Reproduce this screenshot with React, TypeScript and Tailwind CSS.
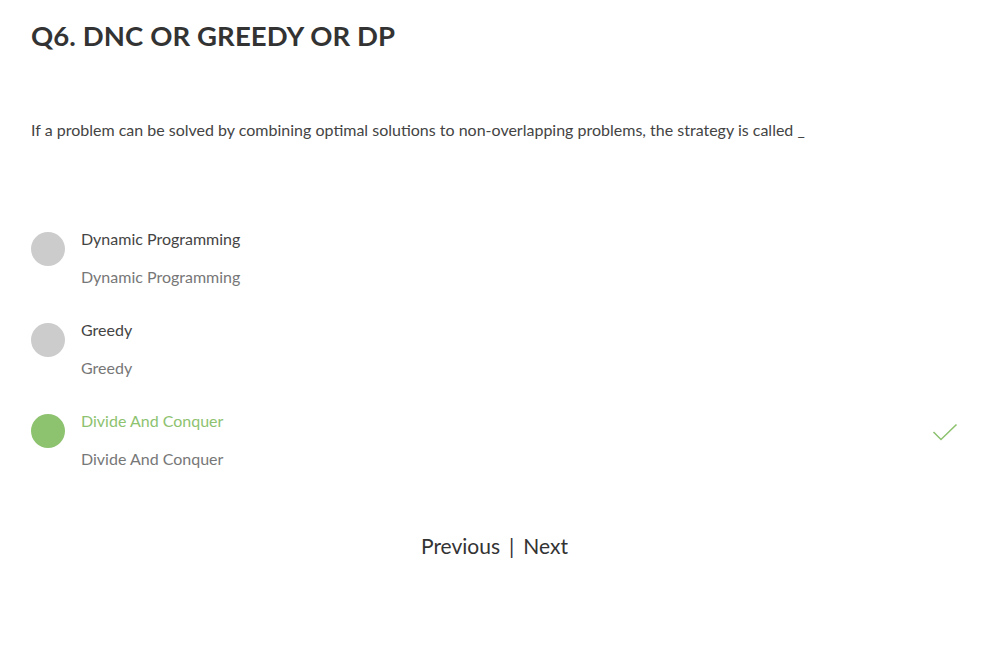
const options = [
  { label: "Dynamic Programming", correct: false },
  { label: "Greedy", correct: false },
  { label: "Divide And Conquer", correct: true },
];

function Check() {
  return (
    <svg width="26" height="18" viewBox="0 0 26 18" fill="none" aria-hidden>
      <path d="M1.5 9 L9 16.5 L24.5 1.5" stroke="#8dc26f" strokeWidth="1.6" />
    </svg>
  );
}

export default function App() {
  return (
    <div
      className="min-h-[664px] w-[988px] bg-white px-[31px] text-[#333]"
      style={{ fontFamily: "Lato, 'Open Sans', sans-serif" }}
    >
      <h1 className="pt-[18px] text-[27.5px] font-bold leading-[36px] tracking-[0.1px] text-[#333]">
        Q6. DNC OR GREEDY OR DP
      </h1>

      <p className="mt-[65px] text-[16px] leading-[22px] text-[#444]">
        If a problem can be solved by combining optimal solutions to non-overlapping problems, the strategy is called _
      </p>

      <div className="mt-[87px] flex flex-col gap-[31px]">
        {options.map((o) => (
          <div key={o.label} className="flex items-start">
            <span
              className={
                "mt-[4px] h-[34px] w-[34px] shrink-0 rounded-full " +
                (o.correct ? "bg-[#8dc26f]" : "bg-[#cccccc]")
              }
            />
            <div className="ml-4 flex flex-1 flex-col gap-4 text-[16px] leading-[22px]">
              <span className={o.correct ? "text-[#8dc26f]" : "text-[#444]"}>{o.label}</span>
              <span className="text-[#777]">{o.label}</span>
            </div>
            {o.correct && (
              <span className="mt-[13px] mr-[-1px]">
                <Check />
              </span>
            )}
          </div>
        ))}
      </div>

      <div className="mt-[62px] flex justify-center gap-[9px] pl-[1px] text-[21px] leading-[28px] text-[#333]">
        <span>Previous</span>
        <span>|</span>
        <span>Next</span>
      </div>
    </div>
  );
}
